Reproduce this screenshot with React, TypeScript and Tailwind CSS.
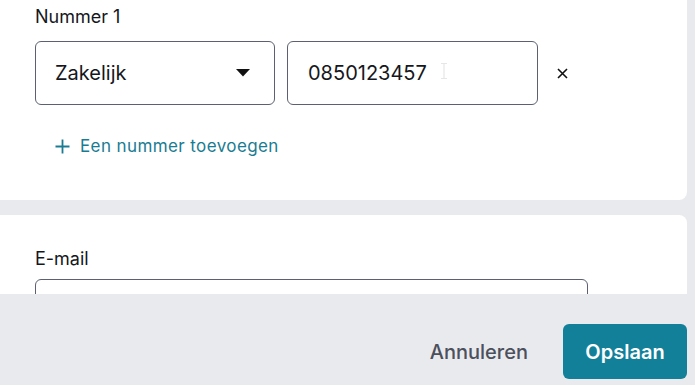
import React from "react";

export default function App() {
  return (
    <div
      className="w-[695px] h-[385px] overflow-hidden bg-[#e9eaee] flex flex-col text-[#15171c]"
      style={{ fontFamily: "Inter, 'Noto Sans', sans-serif" }}
    >
      <div className="h-[294px] overflow-hidden flex flex-col shrink-0">
        {/* Card 1 */}
        <div className="w-[687px] bg-white rounded-br-[8px] pt-[3px] pl-[35px] pb-[42px] shrink-0">
          <div className="text-[18px] leading-[28px] mb-[10px]">Nummer 1</div>
          <div className="flex items-center">
            <div className="w-[240px] h-[64px] border border-[#5b6170] rounded-[6px] flex items-center justify-between pl-[19px] pr-[24px]">
              <span className="text-[20px] leading-[28px]">Zakelijk</span>
              <svg width="14" height="8" viewBox="0 0 14 8">
                <path d="M0 0 L14 0 L7 7.5 Z" fill="#111" />
              </svg>
            </div>
            <div className="ml-[12px] w-[251px] h-[64px] border border-[#5b6170] rounded-[6px] flex items-center pl-[20px] relative">
              <span className="text-[20px] leading-[28px]">0850123457</span>
              <svg
                className="absolute left-[152px] top-[21px]"
                width="8"
                height="16"
                viewBox="0 0 8 16"
              >
                <path
                  d="M1 0.5 H7 M4 0.5 V15.5 M1 15.5 H7"
                  stroke="#e6e6e6"
                  strokeWidth="1.2"
                  fill="none"
                />
              </svg>
            </div>
            <svg className="ml-[19px]" width="11" height="11" viewBox="0 0 11 11">
              <path
                d="M1 1 L10 10 M10 1 L1 10"
                stroke="#111"
                strokeWidth="1.6"
                fill="none"
              />
            </svg>
          </div>
          <div className="mt-[29px] flex items-center pl-[20px] text-[#1a7c92]">
            <svg width="15" height="15" viewBox="0 0 15 15">
              <path
                d="M7.5 0.5 V14.5 M0.5 7.5 H14.5"
                stroke="#1a7c92"
                strokeWidth="1.8"
                fill="none"
              />
            </svg>
            <span className="ml-[10px] text-[17px] leading-[24px] font-normal tracking-[0.4px]">
              Een nummer toevoegen
            </span>
          </div>
        </div>
        {/* Card 2 */}
        <div className="mt-[15px] w-[687px] bg-white rounded-tr-[8px] pt-[30px] pl-[35px] flex-1 shrink-0">
          <div className="text-[18px] leading-[28px] mb-[6px]">E-mail</div>
          <div className="w-[553px] h-[60px] border border-[#5b6170] rounded-[6px]" />
        </div>
      </div>
      {/* Footer */}
      <div className="flex-1 flex items-start justify-end pt-[30px] pr-[8px]">
        <div className="flex items-center">
          <button className="text-[20px] leading-[28px] font-medium text-[#4b505c] mr-[35px] mt-[1px]">
            Annuleren
          </button>
          <button className="w-[124px] h-[55px] rounded-[6px] bg-[#13809a] text-white text-[20px] leading-[28px] font-semibold">
            Opslaan
          </button>
        </div>
      </div>
    </div>
  );
}
